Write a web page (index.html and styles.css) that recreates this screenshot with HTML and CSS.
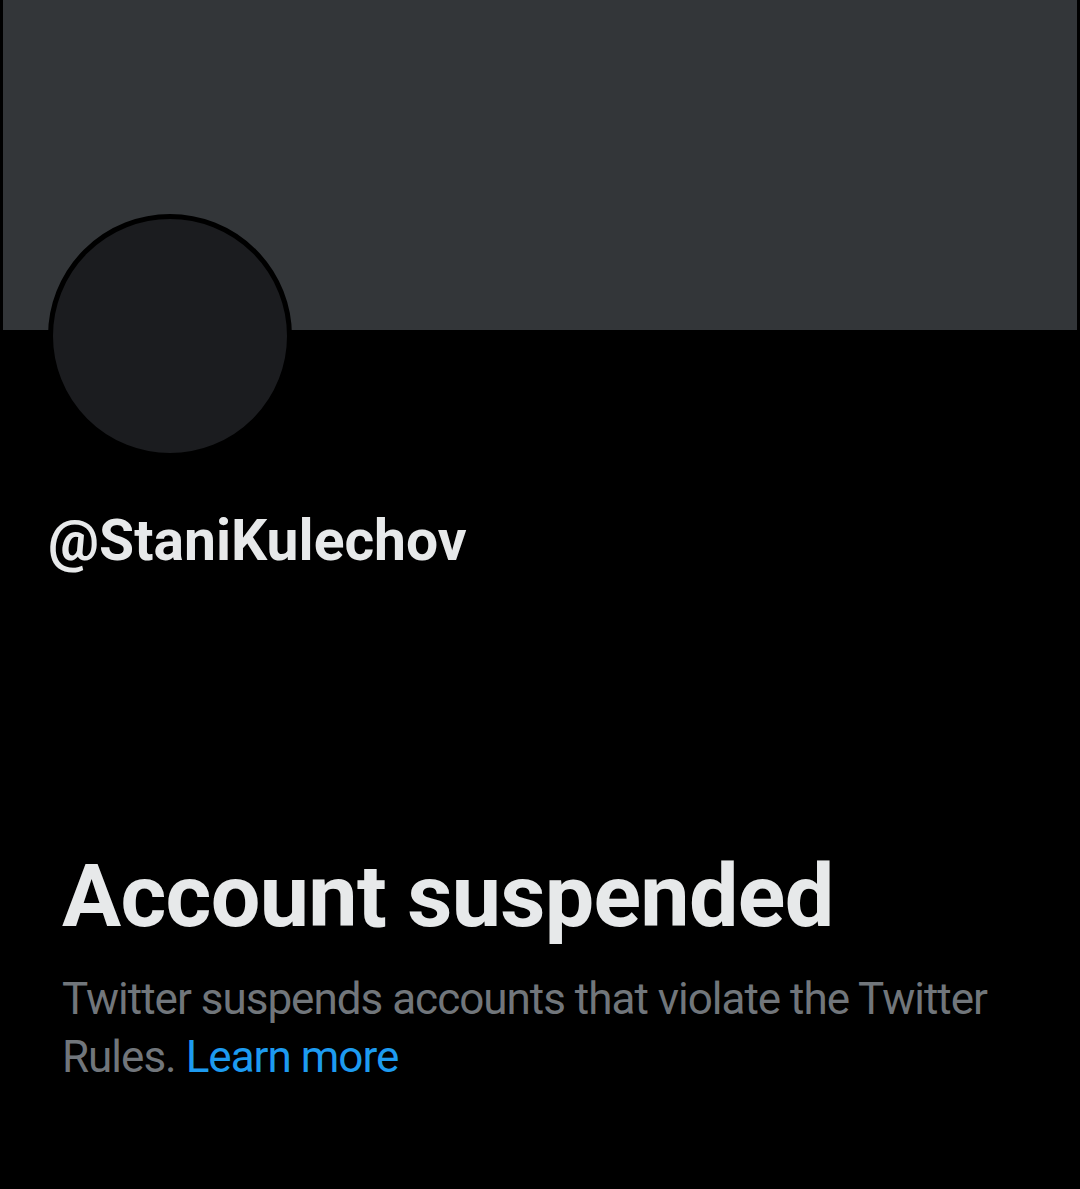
FILE: index.html
```html
<!DOCTYPE html>
<html>
<head>
<meta charset="utf-8">
<link rel="stylesheet" href="styles.css">
</head>
<body>
<div class="page">
  <div class="banner"></div>
  <div class="profile">
    <div class="avatar"></div>
    <div class="handle">@StaniKulechov</div>
  </div>
  <div class="notice">
    <h1 class="title">Account suspended</h1>
    <p class="desc">Twitter suspends accounts that violate the Twitter Rules. <a class="link" href="#">Learn more</a></p>
  </div>
</div>
</body>
</html>
```
FILE: styles.css
```css
html, body {
  margin: 0;
  padding: 0;
  background: #000;
}
.page {
  width: 1080px;
  height: 1189px;
  background: #000;
  font-family: Roboto, "Noto Sans", sans-serif;
  overflow: hidden;
}
.banner {
  margin-left: 3px;
  width: 1074px;
  height: 330px;
  background: #333639;
}
.profile {
  padding-left: 48px;
}
.avatar {
  width: 234px;
  height: 234px;
  margin-top: -116px;
  border: 5px solid #000;
  border-radius: 50%;
  background: #1b1c1f;
}
.handle {
  margin-top: 48px;
  color: #e7e9ea;
  font-weight: 700;
  font-size: 57px;
  line-height: 70px;
}
.notice {
  padding: 0 20px 0 62px;
  margin-top: 270px;
}
.title {
  margin: 0;
  color: #e7e9ea;
  font-weight: 700;
  font-size: 88px;
  line-height: 100px;
  letter-spacing: -0.7px;
}
.desc {
  margin: 24px 0 0;
  color: #71767b;
  font-size: 44px;
  line-height: 58px;
  font-weight: 400;
  letter-spacing: -1px;
}
.link {
  color: #1d9bf0;
  text-decoration: none;
}
```
